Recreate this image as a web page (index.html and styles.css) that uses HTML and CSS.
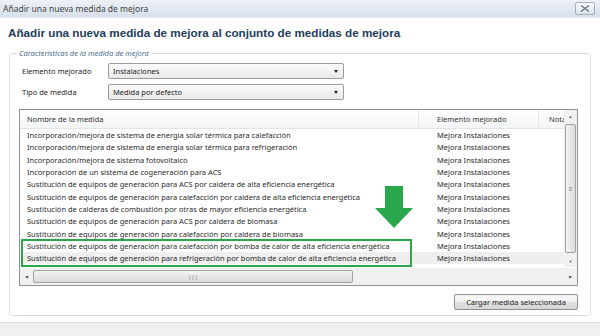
FILE: index.html
```html
<!DOCTYPE html>
<html lang="es">
<head>
  <meta charset="UTF-8" />
  <title>Añadir una nueva medida de mejora</title>
  <link rel="stylesheet" href="styles.css">
</head>
<body>
  <div class="dialog">
    <!-- Window title bar -->
    <div class="titlebar">
      <span class="title">Añadir una nueva medida de mejora</span>
      <span class="close">
        <svg width="10" height="7" viewBox="0 0 10 7"><path d="M1 0.5 L9 6.5 M9 0.5 L1 6.5" stroke="#6f7a86" stroke-width="1.4" fill="none"/></svg>
      </span>
    </div>

    <div class="content">
      <h1>Añadir una nueva medida de mejora al conjunto de medidas de mejora</h1>

      <fieldset class="group">
        <legend>Características de la medida de mejora</legend>

        <div class="field">
          <label>Elemento mejorado</label>
          <div class="select"><span>Instalaciones</span><i class="caret"></i></div>
        </div>
        <div class="field">
          <label>Tipo de medida</label>
          <div class="select"><span>Medida por defecto</span><i class="caret"></i></div>
        </div>

        <div class="listview">
          <div class="list-main">
            <div class="list-body">
              <div class="row head">
                <div class="c-name">Nombre de la medida</div>
                <div class="c-elem">Elemento mejorado</div>
                <div class="c-note">Nota</div>
              </div>
              <div class="row"><div class="c-name">Incorporación/mejora de sistema de energía solar térmica para calefacción</div><div class="c-elem">Mejora Instalaciones</div><div class="c-note"></div></div>
              <div class="row"><div class="c-name">Incorporación/mejora de sistema de energía solar térmica para refrigeración</div><div class="c-elem">Mejora Instalaciones</div><div class="c-note"></div></div>
              <div class="row"><div class="c-name">Incorporación/mejora de sistema fotovoltaico</div><div class="c-elem">Mejora Instalaciones</div><div class="c-note"></div></div>
              <div class="row"><div class="c-name">Incorporación de un sistema de cogeneración para ACS</div><div class="c-elem">Mejora Instalaciones</div><div class="c-note"></div></div>
              <div class="row"><div class="c-name">Sustitución de equipos de generación para ACS por caldera de alta eficiencia energética</div><div class="c-elem">Mejora Instalaciones</div><div class="c-note"></div></div>
              <div class="row"><div class="c-name">Sustitución de equipos de generación para calefacción por caldera de alta eficiencia energética</div><div class="c-elem">Mejora Instalaciones</div><div class="c-note"></div></div>
              <div class="row"><div class="c-name">Sustitución de calderas de combustión por otras de mayor eficiencia energética</div><div class="c-elem">Mejora Instalaciones</div><div class="c-note"></div></div>
              <div class="row"><div class="c-name">Sustitución de equipos de generación para ACS por caldera de biomasa</div><div class="c-elem">Mejora Instalaciones</div><div class="c-note"></div></div>
              <div class="row"><div class="c-name">Sustitución de equipos de generación para calefacción por caldera de biomasa</div><div class="c-elem">Mejora Instalaciones</div><div class="c-note"></div></div>
              <div class="row"><div class="c-name">Sustitución de equipos de generación para calefacción por bomba de calor de alta eficiencia energética</div><div class="c-elem">Mejora Instalaciones</div><div class="c-note"></div></div>
              <div class="row selected"><div class="c-name">Sustitución de equipos de generación para refrigeración por bomba de calor de alta eficiencia energética</div><div class="c-elem">Mejora Instalaciones</div><div class="c-note"></div></div>
            </div>
            <div class="vscroll">
              <div class="sb-arrow up">&#9650;</div>
              <div class="vthumb"><span class="grip">&#8801;</span></div>
              <div class="sb-arrow down">&#9660;</div>
            </div>
          </div>
          <div class="hscroll">
            <div class="sb-arrow left">&#9664;</div>
            <div class="hthumb"><span class="grip">|||</span></div>
            <div class="sb-arrow right">&#9654;</div>
          </div>

          <!-- highlight drawn over the list -->
          <div class="highlight"></div>
          <svg class="arrow" width="38" height="42" viewBox="0 0 38 42">
            <path d="M10 0 H28 V22 H38 L19 42 L0 22 H10 Z" fill="#2aa74c"/>
          </svg>
        </div>

        <div class="actions">
          <button class="btn">Cargar medida seleccionada</button>
        </div>
      </fieldset>
    </div>
    <div class="footer"></div>
  </div>
</body>
</html>
```

FILE: styles.css
```css
body {
  margin: 0;
  width: 600px;
  height: 336px;
  overflow: hidden;
  background: #fff;
  font-family: "Noto Sans", "Open Sans", sans-serif;
  font-size: 7.5px;
  color: #222;
}

.dialog {
  display: flex;
  flex-direction: column;
  height: 336px;
}

/* Title bar */
.titlebar {
  height: 18px;
  box-sizing: border-box;
  flex: none;
  display: flex;
  align-items: center;
  justify-content: space-between;
  padding: 0 5px 0 3px;
  background: linear-gradient(#eef2f7, #d6dfea);
  border-bottom: 1px solid #e4e9ef;
}

.title {
  font-size: 8.5px;
  color: #444;
}

.close {
  width: 18px;
  height: 11px;
  border: 1px solid #a6afba;
  border-radius: 2px;
  background: linear-gradient(#f6f8fa, #dde3ea);
  display: flex;
  align-items: center;
  justify-content: center;
}

.content {
  flex: 1;
  padding: 0 9px;
}

h1 {
  margin: 8px 0 9px -1px;
  font-family: "Liberation Sans", Arial, sans-serif;
  font-size: 11.7px;
  font-weight: bold;
  color: #1e3d5c;
}

/* Group box */
.group {
  margin: 0;
  min-width: 0;
  width: 582px;
  height: 268px;
  box-sizing: border-box;
  padding: 5px 12px 6px 9px;
  border: 1px solid #d6dde3;
  border-radius: 3px;
}

.group legend {
  padding: 0 2px;
  margin-left: -2px;
  font-style: italic;
  font-size: 7.5px;
  color: #4d6d8d;
}

.field {
  display: flex;
  align-items: center;
  height: 16px;
  margin-bottom: 5px;
}

.field label {
  width: 86px;
  padding-left: 3px;
  color: #222;
}

.select {
  width: 226px;
  height: 14px;
  border: 1px solid #9c9c9c;
  border-radius: 2px;
  background: linear-gradient(#fbfbfb, #e9e9e9);
  display: flex;
  align-items: center;
  justify-content: space-between;
  padding: 0 4px;
}

.caret {
  width: 0;
  height: 0;
  border-left: 2.5px solid transparent;
  border-right: 2.5px solid transparent;
  border-top: 3px solid #222;
  margin-right: 1px;
}

/* List view */
.listview {
  position: relative;
  margin-top: 9px;
  border: 1px solid #8e9397;
  height: 175px;
  display: flex;
  flex-direction: column;
}

.list-main {
  flex: 1;
  display: flex;
  overflow: hidden;
}

.list-body {
  flex: 1;
  min-width: 0;
  overflow: hidden;
}

.row {
  display: flex;
  height: 12.3px;
  align-items: center;
  white-space: nowrap;
  color: #2a2a2a;
}

.row.head {
  height: 19px;
  box-sizing: border-box;
  background: linear-gradient(#fff, #f3f4f5);
  border-bottom: 1px solid #e2e4e6;
  color: #333;
}

.row.selected {
  background: #efefef;
}

.c-name {
  flex: none;
  width: 399px;
  padding-left: 7px;
  overflow: hidden;
  box-sizing: border-box;
}

.c-elem {
  flex: none;
  width: 120px;
  padding-left: 18px;
  box-sizing: border-box;
}

.c-note {
  flex: 1;
  padding-left: 10px;
  overflow: hidden;
}

.head .c-name,
.head .c-elem {
  border-right: 1px solid #e3e5e7;
  height: 18px;
  line-height: 18px;
}

/* Scrollbars */
.vscroll {
  width: 13px;
  flex: none;
  background: #f0f0f0;
  display: flex;
  flex-direction: column;
  align-items: center;
}

.sb-arrow {
  font-size: 4px;
  color: #555;
  height: 12px;
  width: 13px;
  display: flex;
  align-items: center;
  justify-content: center;
  flex: none;
}

.vthumb {
  flex: 1;
  width: 9px;
  margin: 2px 0;
  border: 1px solid #a3a3a3;
  border-radius: 2px;
  background: linear-gradient(90deg, #f3f3f3, #dcdcdc);
  display: flex;
  align-items: center;
  justify-content: center;
}

.grip {
  font-size: 6px;
  color: #777;
}

.hscroll {
  height: 17px;
  flex: none;
  background: #f0f0f0;
  display: flex;
  align-items: center;
  border-top: 1px solid #fff;
}

.hthumb {
  width: 318px;
  height: 11px;
  border: 1px solid #a3a3a3;
  border-radius: 2px;
  background: linear-gradient(#f4f4f4, #dadada);
  display: flex;
  align-items: center;
  justify-content: center;
}

.hscroll .right {
  margin-left: auto;
}

/* Overlays */
.highlight {
  position: absolute;
  left: 1px;
  top: 129px;
  width: 387px;
  height: 24px;
  border: 2px solid #2aa74c;
}

.arrow {
  position: absolute;
  left: 355px;
  top: 76px;
}

.actions {
  display: flex;
  justify-content: flex-end;
  margin-top: 8px;
}

.btn {
  width: 124px;
  height: 16px;
  padding: 0;
  font-family: inherit;
  font-size: 7.5px;
  color: #222;
  border: 1px solid #8e8f8f;
  border-radius: 2px;
  background: linear-gradient(#f5f5f5 45%, #dedede 55%, #d6d6d6);
}

.footer {
  height: 13px;
  flex: none;
  background: #f0f0f0;
  border-top: 1px solid #dcdcdc;
}
```
